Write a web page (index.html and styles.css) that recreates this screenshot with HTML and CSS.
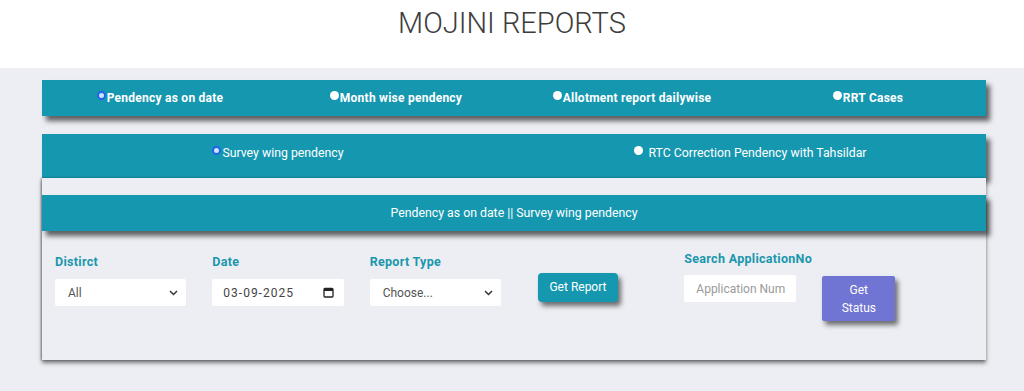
FILE: index.html
```html
<!DOCTYPE html>
<html lang="en">
<head>
<meta charset="utf-8">
<title>MOJINI REPORTS</title>
<link rel="stylesheet" href="styles.css">
</head>
<body>
<header class="header">
  <h1 class="title">MOJINI REPORTS</h1>
</header>
<main class="page">
  <div class="wrap">
    <div class="bar bar-four">
      <label class="opt bold"><span class="radio checked"></span>Pendency as on date</label>
      <label class="opt bold"><span class="radio"></span>Month wise pendency</label>
      <label class="opt bold"><span class="radio"></span>Allotment report dailywise</label>
      <label class="opt bold"><span class="radio"></span>RRT Cases</label>
    </div>
    <div class="bar bar-two">
      <label class="opt"><span class="radio checked"></span>Survey wing pendency</label>
      <label class="opt"><span class="radio gap"></span>RTC Correction Pendency with Tahsildar</label>
    </div>
    <section class="card">
      <div class="bar bar-title">Pendency as on date || Survey wing pendency</div>
      <div class="form">
        <div class="col">
          <div class="lbl">Distirct</div>
          <div class="field"><span>All</span>
            <svg class="chev" width="9" height="6" viewBox="0 0 9 6"><path d="M1 1l3.5 3.5L8 1" fill="none" stroke="#333" stroke-width="1.5"/></svg>
          </div>
        </div>
        <div class="col">
          <div class="lbl">Date</div>
          <div class="field date"><span>03-09-2025</span>
            <svg width="11" height="11" viewBox="0 0 11 11"><rect x="1" y="1.5" width="9" height="8.5" rx="1" fill="none" stroke="#222" stroke-width="1.3"/><rect x="1" y="1.5" width="9" height="2.5" fill="#222"/></svg>
          </div>
        </div>
        <div class="col">
          <div class="lbl">Report Type</div>
          <div class="field"><span>Choose...</span>
            <svg class="chev" width="9" height="6" viewBox="0 0 9 6"><path d="M1 1l3.5 3.5L8 1" fill="none" stroke="#333" stroke-width="1.5"/></svg>
          </div>
        </div>
        <div class="col col-btn">
          <button class="btn btn-report">Get Report</button>
        </div>
        <div class="col search">
          <div class="search-box">
            <div class="lbl">Search ApplicationNo</div>
            <div class="field app"><span class="ph">Application Num</span></div>
          </div>
          <button class="btn btn-status">Get<br>Status</button>
        </div>
      </div>
    </section>
  </div>
</main>
</body>
</html>
```

FILE: styles.css
```css
* { box-sizing: border-box; }
html, body { margin: 0; padding: 0; }
body {
  font-family: Roboto, "Open Sans", Arial, sans-serif;
  background: #eceef3;
  color: #333;
  height: 391px;
  overflow: hidden;
}
.header {
  background: #ffffff;
  height: 68px;
  display: flex;
  justify-content: center;
}
.title {
  margin: 0;
  padding-top: 6px;
  font-size: 29px;
  font-weight: 300;
  letter-spacing: 0;
  color: #3d3d3d;
  line-height: 34px;
}
.page {
  padding-top: 12px;
}
.wrap {
  width: 944px;
  margin-left: 42px;
}
.bar {
  background: #1697b0;
  color: #fff;
  box-shadow: 4px 5px 5px rgba(0, 0, 0, 0.6);
}
.bar-four {
  height: 36px;
  display: grid;
  grid-template-columns: repeat(4, 1fr);
  align-items: center;
  justify-items: center;
}
.bar-two {
  margin-top: 18px;
  height: 44px;
  display: grid;
  grid-template-columns: repeat(2, 1fr);
  align-items: start;
  justify-items: center;
  padding-top: 12px;
}
.opt {
  display: flex;
  align-items: flex-start;
  font-size: 12.3px;
  line-height: 15px;
  color: #fff;
}
.opt.bold {
  font-weight: 700;
  font-size: 12px;
  letter-spacing: 0.25px;
}
.radio {
  width: 9px;
  height: 9px;
  border-radius: 50%;
  background: #fff;
  margin-top: 0;
  margin-right: 1px;
  flex: none;
}
.radio.checked {
  background: #cfe2ff;
  border: 2px solid #1f66e5;
}
.radio.gap { margin-right: 6px; }
.card {
  height: 182px;
  box-shadow: 0 3px 4px rgba(0, 0, 0, 0.5), -1px 0 2px rgba(0, 0, 0, 0.35);
  padding-top: 17px;
  background: #eceef3;
}
.bar-title {
  height: 36px;
  display: flex;
  align-items: center;
  justify-content: center;
  font-size: 12.3px;
}
.form {
  display: grid;
  grid-template-columns: repeat(4, 157.33px) 1fr;
}
.col {
  padding: 22px 13px 0;
}
.lbl {
  color: #1b97ad;
  font-weight: 700;
  font-size: 12.5px;
  letter-spacing: 0.3px;
  line-height: 18px;
  margin-bottom: 8px;
}
.field {
  position: relative;
  height: 27px;
  background: #fff;
  border-radius: 2px;
  display: flex;
  align-items: center;
  justify-content: space-between;
  padding: 0 8px 0 13px;
  font-size: 12px;
  color: #555;
}
.field.date { padding-left: 11px; padding-right: 10px; color: #444; letter-spacing: 1px; }
.col-btn { padding-top: 42px; }
.btn {
  font-family: inherit;
  border: none;
  color: #fff;
  font-size: 12px;
  cursor: pointer;
  border-radius: 4px;
  box-shadow: 3px 4px 5px rgba(0, 0, 0, 0.55);
}
.btn-report {
  margin-left: 11px;
  width: 80px;
  height: 29px;
  background: #1697b0;
  padding: 0;
  line-height: 14px;
  padding-bottom: 2px;
}
.search {
  display: flex;
  padding-top: 19px;
  gap: 26px;
}
.search-box { width: 112px; }
.search .lbl { margin-bottom: 7px; white-space: nowrap; }
.field.app { padding-left: 12px; }
.ph { color: #9a9a9a; font-size: 12px; }
.btn-status {
  margin-top: 26px;
  width: 73px;
  height: 45px;
  background: #7074d2;
  border-radius: 2px;
  line-height: 18px;
  padding: 0;
}
```
